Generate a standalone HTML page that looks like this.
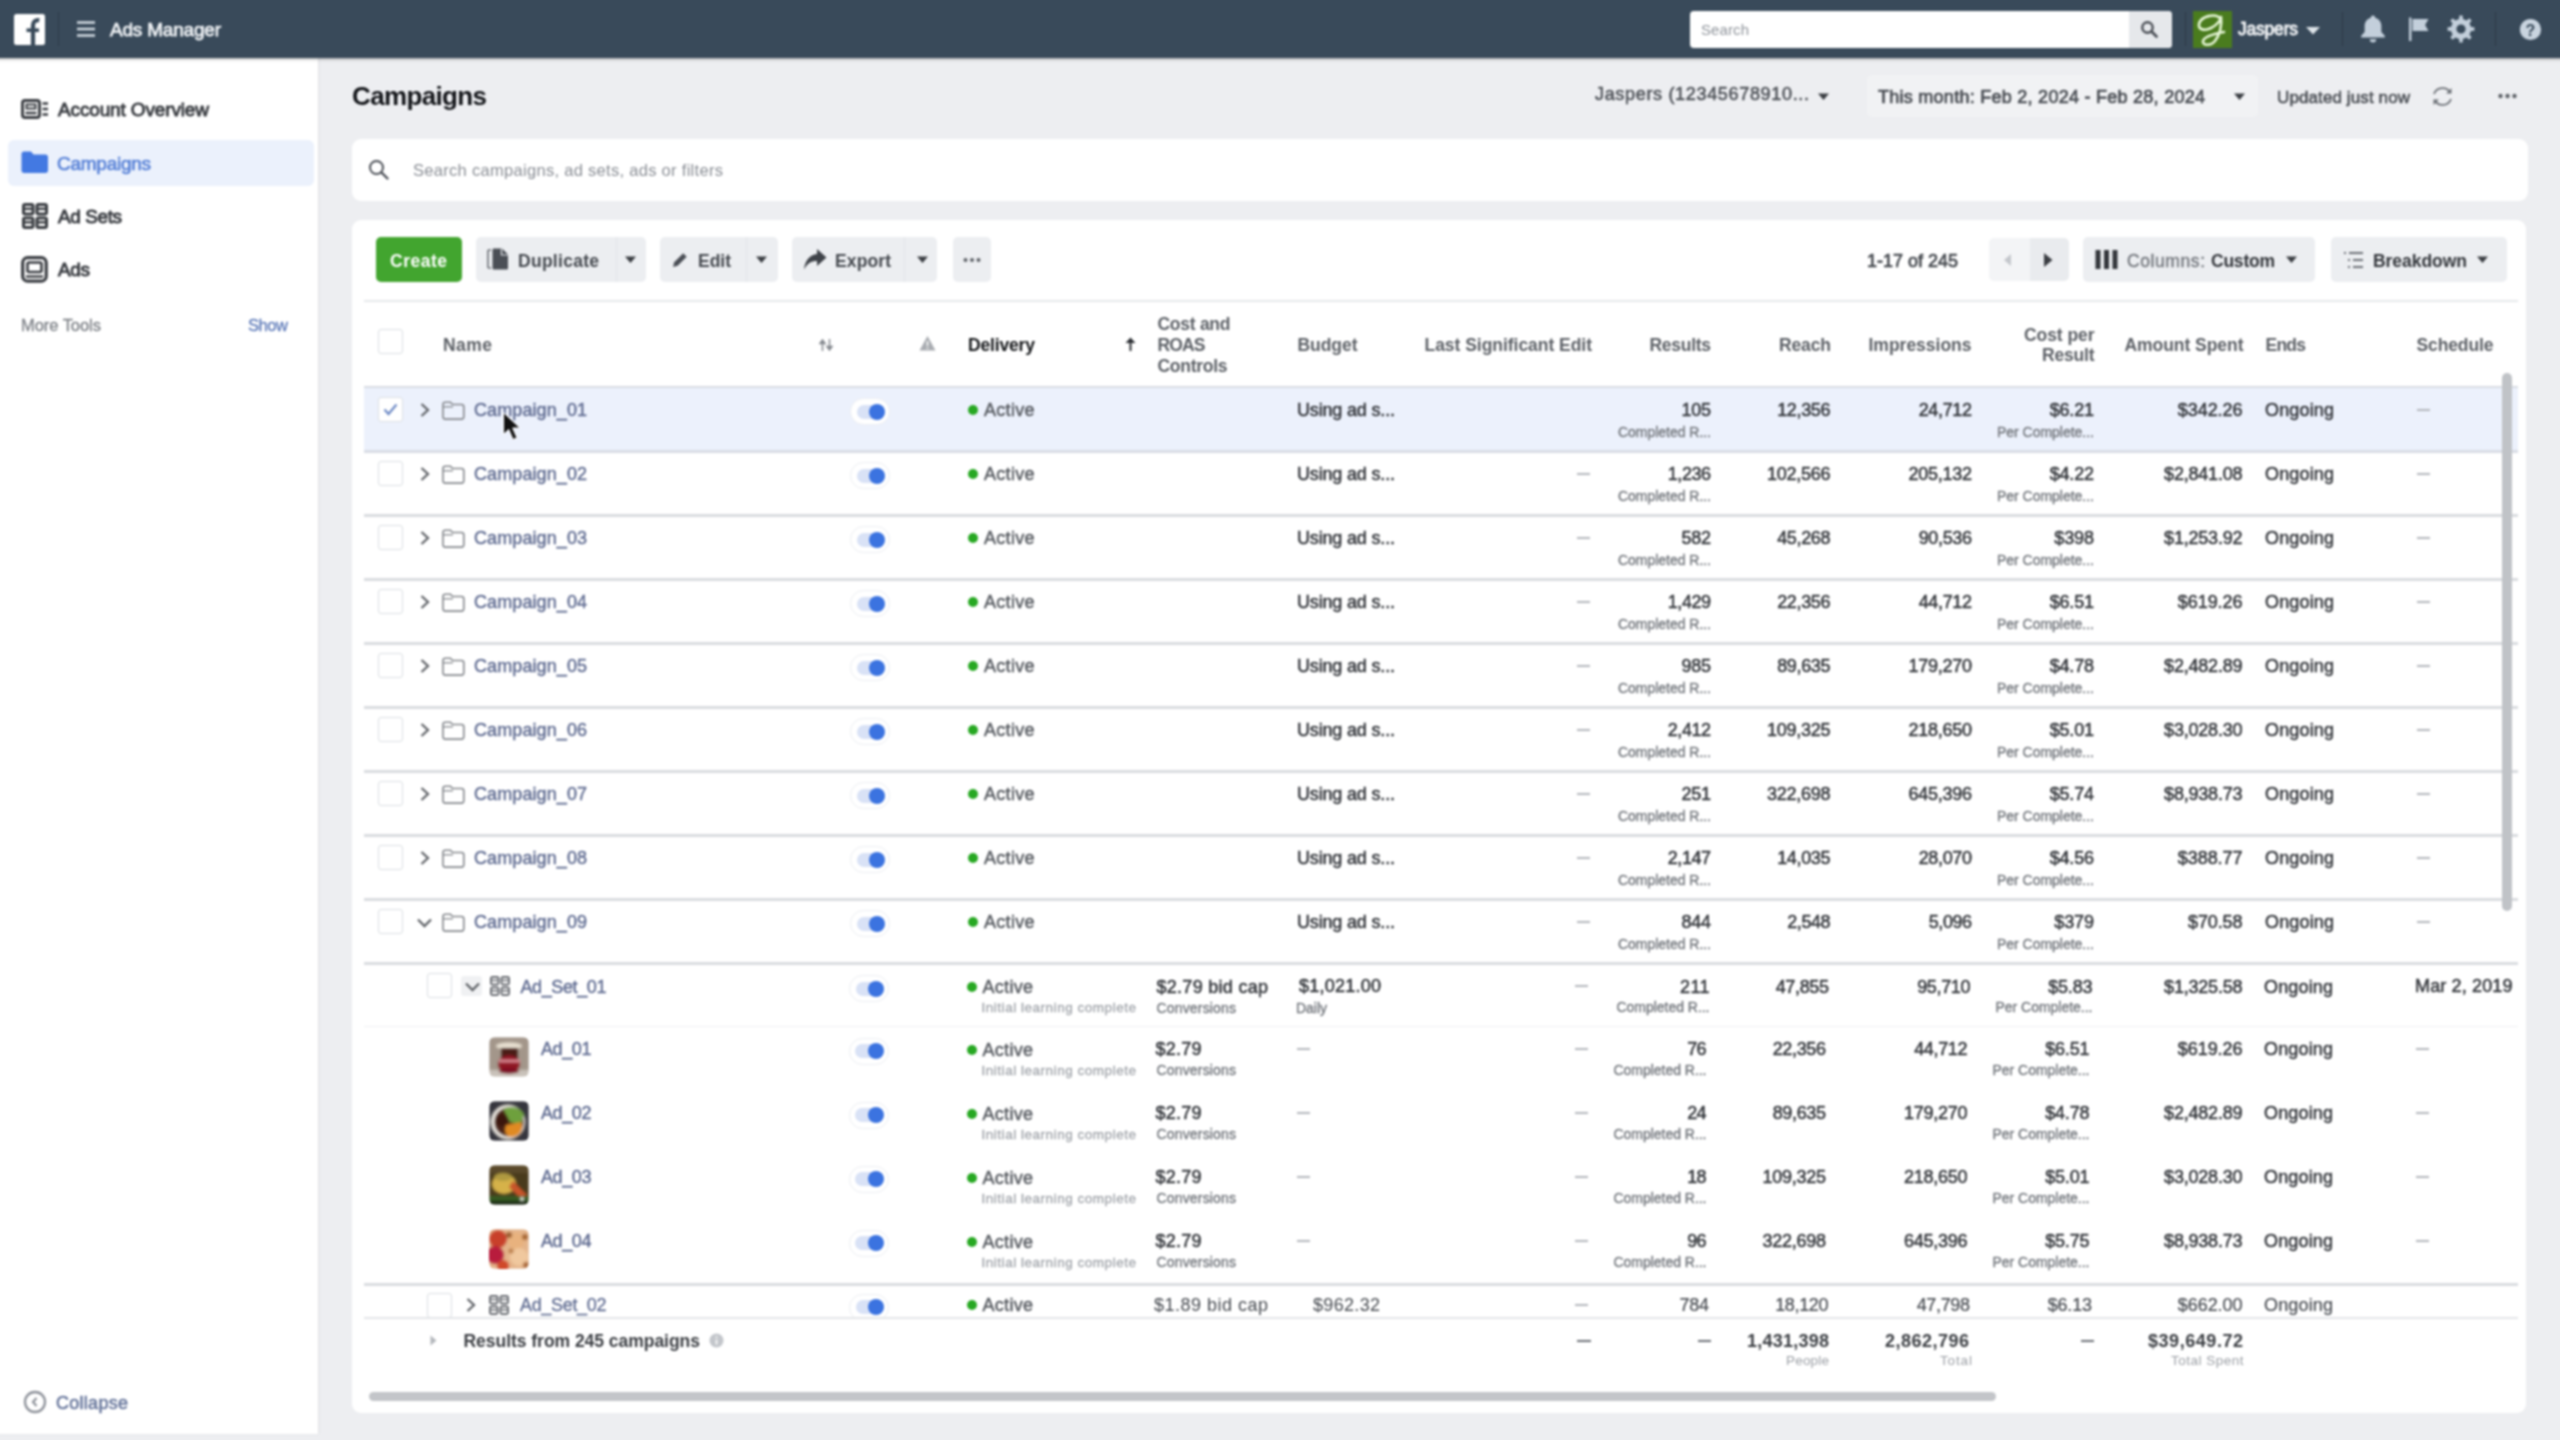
<!DOCTYPE html>
<html lang="en"><head><meta charset="utf-8"><title>Ads Manager - Campaigns</title>
<style>
html,body{margin:0;padding:0}
body{width:2560px;height:1440px;overflow:hidden;position:relative;background:#edeef1;font-family:"Liberation Sans",sans-serif;}
#w{position:absolute;left:-20px;top:-20px;width:2600px;height:1480px;background:#edeef1;filter:blur(.9px)}
#c{position:absolute;left:20px;top:20px;width:2560px;height:1440px}
#c div,#c span,#c svg{position:absolute;display:block;box-sizing:border-box}
#c span{white-space:pre}
</style></head>
<body>
<div id="w"><div id="c">
<div style="left:-20px;top:58px;width:338px;height:1376px;background:#fff;box-shadow:1px 0 2px rgba(0,0,0,.06);"></div>
<div style="left:8px;top:140px;width:306px;height:46px;background:#ebf1fc;border-radius:6px;"></div>
<div style="left:-20px;top:-20px;width:2600px;height:78px;background:#394a5a;box-shadow:0 1px 3px rgba(0,0,0,.35);"></div>
<svg style="left:14px;top:14px;" width="31" height="31" viewBox="0 0 31 31"><rect width="31" height="31" rx="2.500" fill="#fff"/><path d="M19 31V11.500c0-3.800 2.300-5.800 6.300-5.300" fill="none" stroke="#394a5a" stroke-width="4.200"/><path d="M12.500 16.200h12.500" stroke="#394a5a" stroke-width="3.600"/></svg>
<div style="left:58px;top:12px;width:1px;height:34px;background:rgba(0,0,0,.18);"></div>
<svg style="left:77px;top:20px;" width="18" height="18" viewBox="0 0 18 18"><path d="M0 2.5h18M0 9h18M0 15.5h18" stroke="#d3dbe3" stroke-width="2.500"/></svg>
<span style="left:110.00px;top:20px;font-size:19px;line-height:19px;color:#eef1f4;letter-spacing:-0.202px;-webkit-text-stroke:.75px #eef1f4;">Ads Manager</span>
<div style="left:1690px;top:11px;width:482px;height:37px;background:#fff;border-radius:4px;"></div>
<div style="left:2129px;top:11px;width:43px;height:37px;background:#e6e8eb;border-radius:0 4px 4px 0;"></div>
<span style="left:1701.00px;top:22px;font-size:15px;line-height:15px;color:#8f949b;letter-spacing:0.094px;">Search</span>
<svg style="left:2140px;top:20px;" width="19" height="19" viewBox="0 0 19 19"><circle cx="7.5" cy="7.5" r="5.2" fill="none" stroke="#4b4f56" stroke-width="2.4"/><path d="M11.5 11.5l5 5" stroke="#4b4f56" stroke-width="2.8" stroke-linecap="round"/></svg>
<div style="left:2185px;top:12px;width:1px;height:34px;background:rgba(0,0,0,.22);"></div>
<div style="left:2193px;top:11px;width:39px;height:37px;background:#4a7c1e;"></div>
<svg style="left:2193px;top:11px;" width="39" height="37" viewBox="0 0 39 37"><path d="M27 7C22 2 8 5 6 13C5 19 12 20 18 17C24 14 28 9 28 6C29 14 27 24 22 30C18 35 9 35 10 30C11 26 20 23 31 21" fill="none" stroke="#e6f6d6" stroke-width="2.600" stroke-linecap="round" stroke-linejoin="round"/></svg>
<span style="left:2238.00px;top:21px;font-size:17.5px;line-height:17.5px;color:#f3f5f7;letter-spacing:-0.214px;-webkit-text-stroke:.8px #f3f5f7;">Jaspers</span>
<svg style="left:2306px;top:27px;" width="14" height="8" viewBox="0 0 14 8"><path d="M0 0h14l-7 7.5z" fill="#dfe5ea"/></svg>
<div style="left:2342px;top:12px;width:1px;height:34px;background:rgba(0,0,0,.22);"></div>
<svg style="left:2358px;top:14px;" width="30" height="30" viewBox="0 0 28 28"><path d="M14 1.5c-1.2 0-2 .8-2 1.9-3.6.9-5.8 3.9-5.8 7.8v5.6L3 20.4V22h22v-1.6l-3.2-3.6v-5.6c0-3.9-2.2-6.9-5.8-7.8 0-1.1-.8-1.9-2-1.9zM11 23.5a3 3 0 006 0z" fill="#c3cfdb"/></svg>
<svg style="left:2406px;top:16px;" width="26" height="26" viewBox="0 0 26 26"><path d="M3 1.5h2.4V25H3zM6.5 3h16l-3.4 6 3.4 6h-16z" fill="#c3cfdb"/></svg>
<svg style="left:2447px;top:15px;" width="28" height="28" viewBox="0 0 28 28"><path fill-rule="evenodd" d="M24.0 12.1L27.4 12.3L27.4 15.7L24.0 15.9L22.4 19.7L24.7 22.3L22.3 24.7L19.7 22.4L15.9 24.0L15.7 27.4L12.3 27.4L12.1 24.0L8.3 22.4L5.7 24.7L3.3 22.3L5.6 19.7L4.0 15.9L0.6 15.7L0.6 12.3L4.0 12.1L5.6 8.3L3.3 5.7L5.7 3.3L8.3 5.6L12.1 4.0L12.3 0.6L15.7 0.6L15.9 4.0L19.7 5.6L22.3 3.3L24.7 5.7L22.4 8.3zM18.6 14.0a4.6 4.6 0 1 0 -9.2 0a4.6 4.6 0 1 0 9.2 0z" fill="#c3cfdb"/></svg>
<div style="left:2495px;top:12px;width:1px;height:34px;background:rgba(0,0,0,.22);"></div>
<svg style="left:2519px;top:18px;" width="23" height="23" viewBox="0 0 23 23"><circle cx="11.5" cy="11.5" r="10.600" fill="#c9d4df"/></svg>
<span style="left:2525.61px;top:23px;font-size:16px;line-height:16px;color:#394a5a;font-weight:700;">?</span>
<svg style="left:21px;top:98px;" width="28" height="22" viewBox="0 0 28 22"><rect x="1.500" y="2.500" width="17" height="17" rx="2.500" fill="none" stroke="#3b3e43" stroke-width="2.900"/><rect x="5.500" y="6.500" width="9" height="4" fill="none" stroke="#3b3e43" stroke-width="2"/><path d="M4.500 15h11M21.500 5.500h5.500M21.500 11h5.500M21.500 16.500h5.500" stroke="#3b3e43" stroke-width="2.400"/></svg>
<span style="left:58.00px;top:100px;font-size:19px;line-height:19px;color:#3b3e43;letter-spacing:-0.142px;-webkit-text-stroke:.9px #3b3e43;">Account Overview</span>
<svg style="left:21px;top:151px;" width="28" height="23" viewBox="0 0 28 23"><path d="M0.500 3c0-1.400 1-2.500 2.500-2.500h7l2.500 3h12c1.400 0 2.500 1 2.500 2.500v13.500c0 1.400-1 2.500-2.500 2.500h-21.500c-1.400 0-2.500-1-2.500-2.500z" fill="#4379e2"/></svg>
<span style="left:57.00px;top:154px;font-size:19px;line-height:19px;color:#5b84d8;letter-spacing:-0.264px;-webkit-text-stroke:.7px #5b84d8;">Campaigns</span>
<svg style="left:21.5px;top:203px;" width="27" height="27" viewBox="0 0 27 27"><rect x="1.5" y="1.5" width="9.5" height="9.5" rx="1.5" fill="none" stroke="#3b3e43" stroke-width="3"/><path d="M1.5 5.775h9.5" stroke="#3b3e43" stroke-width="2.4"/><rect x="15" y="1.5" width="9.5" height="9.5" rx="1.5" fill="none" stroke="#3b3e43" stroke-width="3"/><path d="M15 5.775h9.5" stroke="#3b3e43" stroke-width="2.4"/><rect x="1.5" y="15" width="9.5" height="9.5" rx="1.5" fill="none" stroke="#3b3e43" stroke-width="3"/><path d="M1.5 19.275h9.5" stroke="#3b3e43" stroke-width="2.4"/><rect x="15" y="15" width="9.5" height="9.5" rx="1.5" fill="none" stroke="#3b3e43" stroke-width="3"/><path d="M15 19.275h9.5" stroke="#3b3e43" stroke-width="2.4"/></svg>
<span style="left:58.00px;top:207px;font-size:19px;line-height:19px;color:#3b3e43;letter-spacing:-0.424px;-webkit-text-stroke:.9px #3b3e43;">Ad Sets</span>
<svg style="left:21px;top:255.5px;" width="28" height="28" viewBox="0 0 28 28"><rect x="1.700" y="1.700" width="23.500" height="23.500" rx="5" fill="none" stroke="#3b3e43" stroke-width="3.200"/><rect x="6.500" y="6.500" width="14" height="9.500" rx="1.500" fill="none" stroke="#3b3e43" stroke-width="2.600"/><path d="M5 20.500h17" stroke="#3b3e43" stroke-width="2.400"/></svg>
<span style="left:58.00px;top:260px;font-size:19px;line-height:19px;color:#3b3e43;letter-spacing:-0.375px;-webkit-text-stroke:.9px #3b3e43;">Ads</span>
<span style="left:21.00px;top:317px;font-size:16.5px;line-height:16.5px;color:#7d8187;letter-spacing:-0.045px;-webkit-text-stroke:.3px #7d8187;">More Tools</span>
<span style="left:248.00px;top:317px;font-size:16.5px;line-height:16.5px;color:#5c79b8;letter-spacing:-0.427px;-webkit-text-stroke:.3px #5c79b8;">Show</span>
<svg style="left:23px;top:1390px;" width="24" height="24" viewBox="0 0 24 24"><circle cx="12" cy="12" r="10" fill="none" stroke="#8f939b" stroke-width="2.300"/><path d="M13.500 8l-3.500 4 3.500 4" fill="none" stroke="#8f939b" stroke-width="2.200"/></svg>
<span style="left:56.00px;top:1394px;font-size:18px;line-height:18px;color:#65749a;letter-spacing:0.279px;-webkit-text-stroke:.5px #65749a;">Collapse</span>
<span style="left:352.00px;top:83px;font-size:26px;line-height:26px;color:#14161a;font-weight:700;letter-spacing:-0.645px;">Campaigns</span>
<span style="left:1595.00px;top:85px;font-size:18px;line-height:18px;color:#50545a;letter-spacing:0.675px;-webkit-text-stroke:.55px #50545a;">Jaspers (12345678910...</span>
<svg style="left:1817px;top:93px;" width="13" height="8" viewBox="0 0 13 8"><path d="M1 0.500h11l-5.500 6.500z" fill="#3b3e43"/></svg>
<div style="left:1867px;top:75px;width:391px;height:42px;background:#f1f2f4;border-radius:5px;"></div>
<span style="left:1878.00px;top:88px;font-size:18px;line-height:18px;color:#4a4e54;letter-spacing:0.265px;-webkit-text-stroke:.7px #4a4e54;">This month: Feb 2, 2024 - Feb 28, 2024</span>
<svg style="left:2233px;top:93px;" width="13" height="8" viewBox="0 0 13 8"><path d="M1 0.500h11l-5.500 6.500z" fill="#3b3e43"/></svg>
<span style="left:2277.00px;top:89px;font-size:17px;line-height:17px;color:#4a4e54;letter-spacing:0.108px;-webkit-text-stroke:.55px #4a4e54;">Updated just now</span>
<svg style="left:2431px;top:85px;" width="23" height="23" viewBox="0 0 23 23"><path d="M19.500 8a9 9 0 00-16.500 1M3.500 15a9 9 0 0016.500-1" fill="none" stroke="#6d7177" stroke-width="1.800"/><path d="M20.500 3v5.500h-5.500zM2.500 20v-5.500h5.500z" fill="#6d7177"/></svg>
<svg style="left:2498px;top:93px;" width="19" height="6" viewBox="0 0 19 6"><circle cx="2.500" cy="3" r="2.200" fill="#5d6167"/><circle cx="9.500" cy="3" r="2.200" fill="#5d6167"/><circle cx="16.500" cy="3" r="2.200" fill="#5d6167"/></svg>
<div style="left:352px;top:139px;width:2176px;height:62px;background:#fff;border-radius:9px;"></div>
<svg style="left:368px;top:159px;" width="22" height="22" viewBox="0 0 22 22"><circle cx="8.500" cy="8.500" r="6.500" fill="none" stroke="#4b4f56" stroke-width="2"/><path d="M13.500 13.500l6 6" stroke="#4b4f56" stroke-width="2.400" stroke-linecap="round"/></svg>
<span style="left:413.00px;top:162px;font-size:16.5px;line-height:16.5px;color:#8a8e95;letter-spacing:0.298px;">Search campaigns, ad sets, ads or filters</span>
<div style="left:352px;top:220px;width:2174px;height:1193px;background:#fff;border-radius:9px;"></div>
<div style="left:376px;top:237px;width:86px;height:45px;background:#42a52f;border-radius:5px;"></div>
<span style="left:390.00px;top:253px;font-size:17.5px;line-height:17.5px;color:#fff;font-weight:700;letter-spacing:0.503px;">Create</span>
<div style="left:476px;top:237px;width:170px;height:45px;background:#eceef1;border-radius:5px;"></div>
<div style="left:616px;top:237px;width:1px;height:45px;background:#e2e4e8;"></div>
<svg style="left:486px;top:247px;" width="24" height="24" viewBox="0 0 24 24"><path d="M2 3h3M2 3v18M2 21h3" stroke="#6d7177" stroke-width="1.600" fill="none"/><path d="M8 1.500h8l6 6v13.500c0 1-.5 1.500-1.500 1.500h-12.500c-1 0-1.500-.5-1.500-1.500v-18c0-1 .5-1.500 1.500-1.500z" fill="#4b4f56"/><path d="M15.500 1.500v6.500h6.500" fill="none" stroke="#eceef1" stroke-width="1.200"/></svg>
<span style="left:518.00px;top:253px;font-size:17.5px;line-height:17.5px;color:#44484e;font-weight:700;letter-spacing:0.277px;">Duplicate</span>
<svg style="left:624px;top:256px;" width="13" height="8" viewBox="0 0 13 8"><path d="M1 0.500h11l-5.500 6.500z" fill="#3b3e43"/></svg>
<div style="left:660px;top:237px;width:118px;height:45px;background:#eceef1;border-radius:5px;"></div>
<div style="left:746px;top:237px;width:1px;height:45px;background:#e2e4e8;"></div>
<svg style="left:671px;top:251px;" width="18" height="18" viewBox="0 0 18 18"><path d="M2 16l1.200-4.700 9-9 3.500 3.500-9 9z" fill="#4b4f56"/></svg>
<span style="left:698.00px;top:253px;font-size:17.5px;line-height:17.5px;color:#44484e;font-weight:700;letter-spacing:-0.021px;">Edit</span>
<svg style="left:755px;top:256px;" width="13" height="8" viewBox="0 0 13 8"><path d="M1 0.500h11l-5.500 6.500z" fill="#3b3e43"/></svg>
<div style="left:792px;top:237px;width:145px;height:45px;background:#eceef1;border-radius:5px;"></div>
<div style="left:904px;top:237px;width:1px;height:45px;background:#e2e4e8;"></div>
<svg style="left:803px;top:248px;" width="24" height="23" viewBox="0 0 24 23"><path d="M14 1l9.500 8.500-9.500 8.500v-5c-6 0-10 2.500-13 8.500 1-9 5.500-14.500 13-15.500z" fill="#3f4349"/></svg>
<span style="left:835.00px;top:253px;font-size:17.5px;line-height:17.5px;color:#44484e;font-weight:700;letter-spacing:0.113px;">Export</span>
<svg style="left:916px;top:256px;" width="13" height="8" viewBox="0 0 13 8"><path d="M1 0.500h11l-5.500 6.500z" fill="#3b3e43"/></svg>
<div style="left:953px;top:237px;width:38px;height:45px;background:#eceef1;border-radius:5px;"></div>
<svg style="left:963px;top:257px;" width="18" height="6" viewBox="0 0 18 6"><circle cx="2.500" cy="3" r="2" fill="#5d6167"/><circle cx="9" cy="3" r="2" fill="#5d6167"/><circle cx="15.500" cy="3" r="2" fill="#5d6167"/></svg>
<span style="left:1867.00px;top:252px;font-size:18px;line-height:18px;color:#44484e;-webkit-text-stroke:.7px #44484e;">1-17 of 245</span>
<div style="left:1989px;top:238px;width:41px;height:43px;background:#f3f4f6;border-radius:5px 0 0 5px;"></div>
<div style="left:2030px;top:238px;width:39px;height:43px;background:#e9ebee;border-radius:0 5px 5px 0;"></div>
<svg style="left:2003px;top:254px;" width="8" height="12" viewBox="0 0 8 12"><path d="M8 0v12l-7-6z" fill="#c4c7cc"/></svg>
<svg style="left:2044px;top:253px;" width="9" height="14" viewBox="0 0 9 14"><path d="M0 0v14l8.500-7z" fill="#3b3e43"/></svg>
<div style="left:2083px;top:237px;width:232px;height:45px;background:#eceef1;border-radius:5px;"></div>
<svg style="left:2095px;top:250px;" width="23" height="19" viewBox="0 0 23 19"><path d="M3 0v19M11.500 0v19M20 0v19" stroke="#33363b" stroke-width="5"/></svg>
<span style="left:2127.00px;top:253px;font-size:17.5px;line-height:17.5px;color:#72767c;letter-spacing:0.583px;-webkit-text-stroke:.35px #72767c;">Columns:</span>
<span style="left:2211.00px;top:253px;font-size:17.5px;line-height:17.5px;color:#33363b;font-weight:700;letter-spacing:-0.228px;">Custom</span>
<svg style="left:2285px;top:256px;" width="13" height="8" viewBox="0 0 13 8"><path d="M1 0.500h11l-5.500 6.500z" fill="#3b3e43"/></svg>
<div style="left:2331px;top:237px;width:176px;height:45px;background:#eceef1;border-radius:5px;"></div>
<svg style="left:2343px;top:251px;" width="21" height="18" viewBox="0 0 21 18"><path d="M1 2h2M6 2h14M5 9h2M10 9h10M5 16h2M10 16h10" stroke="#6d7177" stroke-width="1.800"/></svg>
<span style="left:2373.00px;top:253px;font-size:17.5px;line-height:17.5px;color:#33363b;font-weight:700;letter-spacing:-0.041px;">Breakdown</span>
<svg style="left:2476px;top:256px;" width="13" height="8" viewBox="0 0 13 8"><path d="M1 0.500h11l-5.500 6.500z" fill="#3b3e43"/></svg>
<div style="left:364px;top:300px;width:2154px;height:2px;background:#e6e8eb;"></div>
<div style="left:378px;top:329px;width:25px;height:25px;background:#fff;border-radius:3px;border:1.500px solid #dcdfe3;"></div>
<span style="left:443.00px;top:337px;font-size:17.5px;line-height:17.5px;color:#5c6066;font-weight:600;letter-spacing:0.443px;">Name</span>
<svg style="left:819px;top:339px;" width="15" height="12" viewBox="0 0 15 12"><path d="M3.500 12v-10M1 4.500l2.500-3.500 2.500 3.500zM10.500 0v10M8 7.500l2.500 3.500 2.500-3.500z" stroke="#85898f" stroke-width="1.500" fill="#85898f"/></svg>
<svg style="left:919px;top:335px;" width="17" height="16" viewBox="0 0 17 16"><path d="M8.500 1l8 14.500h-16z" fill="#a9acb1"/><path d="M8.500 6v5M8.500 12.500v1.500" stroke="#fff" stroke-width="1.500"/></svg>
<span style="left:968.00px;top:337px;font-size:17.5px;line-height:17.5px;color:#121417;font-weight:700;letter-spacing:-0.158px;">Delivery</span>
<svg style="left:1125px;top:337px;" width="11" height="14" viewBox="0 0 11 14"><path d="M5.500 14v-11" stroke="#2b2e33" stroke-width="2"/><path d="M0.500 6l5-5.500 5 5.500z" fill="#2b2e33"/></svg>
<span style="left:1157.50px;top:316px;font-size:17.5px;line-height:17.5px;color:#5c6066;font-weight:600;letter-spacing:-0.268px;">Cost and</span>
<span style="left:1157.50px;top:337px;font-size:17.5px;line-height:17.5px;color:#5c6066;font-weight:600;letter-spacing:-0.854px;">ROAS</span>
<span style="left:1157.50px;top:358px;font-size:17.5px;line-height:17.5px;color:#5c6066;font-weight:600;letter-spacing:-0.279px;">Controls</span>
<span style="left:1297.50px;top:337px;font-size:17.5px;line-height:17.5px;color:#5c6066;font-weight:600;letter-spacing:-0.056px;">Budget</span>
<span style="left:1424.50px;top:337px;font-size:17.5px;line-height:17.5px;color:#5c6066;font-weight:600;letter-spacing:-0.036px;">Last Significant Edit</span>
<span style="left:1649.50px;top:337px;font-size:17.5px;line-height:17.5px;color:#5c6066;font-weight:600;letter-spacing:-0.286px;">Results</span>
<span style="left:1779.00px;top:337px;font-size:17.5px;line-height:17.5px;color:#5c6066;font-weight:600;letter-spacing:-0.133px;">Reach</span>
<span style="left:1868.50px;top:337px;font-size:17.5px;line-height:17.5px;color:#5c6066;font-weight:600;letter-spacing:-0.011px;">Impressions</span>
<span style="left:2024.00px;top:327px;font-size:17.5px;line-height:17.5px;color:#5c6066;font-weight:600;letter-spacing:-0.069px;">Cost per</span>
<span style="left:2042.00px;top:347px;font-size:17.5px;line-height:17.5px;color:#5c6066;font-weight:600;letter-spacing:-0.197px;">Result</span>
<span style="left:2124.50px;top:337px;font-size:17.5px;line-height:17.5px;color:#5c6066;font-weight:600;letter-spacing:-0.053px;">Amount Spent</span>
<span style="left:2265.50px;top:337px;font-size:17.5px;line-height:17.5px;color:#5c6066;font-weight:600;letter-spacing:-0.766px;">Ends</span>
<span style="left:2416.50px;top:337px;font-size:17.5px;line-height:17.5px;color:#5c6066;font-weight:600;letter-spacing:-0.116px;">Schedule</span>
<div style="left:364px;top:387px;width:2154px;height:64px;background:#ecf1fc;"></div>
<div style="left:364px;top:386.25px;width:2154px;height:2px;background:#d8dce3;"></div>
<div style="left:378px;top:397px;width:25px;height:25px;background:#fff;border-radius:3px;border:1.500px solid #dcdfe3;"></div>
<svg style="left:383px;top:403px;" width="15" height="13" viewBox="0 0 15 13"><path d="M1.500 6.500l4 4.500 8-9.500" fill="none" stroke="#6f8bc6" stroke-width="2.200"/></svg>
<svg style="left:420px;top:402.5px;" width="10" height="14" viewBox="0 0 10 14"><path d="M1.500 1l6.500 6-6.500 6" fill="none" stroke="#63666b" stroke-width="2.300"/></svg>
<svg style="left:441.5px;top:400.5px;" width="23" height="19" viewBox="0 0 23 19"><path d="M1 3.500c0-1.300.8-2.300 2.200-2.300h5.300l2 2.300h9c1.400 0 2.300.9 2.300 2.300v10c0 1.400-.9 2.300-2.300 2.300h-16.200c-1.400 0-2.300-.9-2.300-2.300z" fill="none" stroke="#85888d" stroke-width="1.600"/><path d="M1 5.800h10" stroke="#85888d" stroke-width="1.300"/></svg>
<span style="left:474.00px;top:401px;font-size:18px;line-height:18px;color:#626e93;letter-spacing:0.092px;-webkit-text-stroke:.45px #626e93;">Campaign_01</span>
<div style="left:850px;top:398px;width:40px;height:27px;background:#fff;border-radius:13.5px;border:1px solid #eceef2;"></div>
<div style="left:856.5px;top:404.5px;width:28px;height:14px;background:#d9e2f6;border-radius:7px;"></div>
<div style="left:869px;top:403.5px;width:16px;height:16px;background:#3b73e0;border-radius:8px;"></div>
<div style="left:968px;top:405px;width:10px;height:10px;background:#27a822;border-radius:5px;"></div>
<span style="left:984.00px;top:401px;font-size:18px;line-height:18px;color:#565a60;letter-spacing:0.294px;-webkit-text-stroke:.45px #565a60;">Active</span>
<span style="left:1297.00px;top:401px;font-size:18px;line-height:18px;color:#34373c;letter-spacing:-0.171px;-webkit-text-stroke:.5px #34373c;">Using ad s...</span>
<span style="left:1681.55px;top:401px;font-size:18px;line-height:18px;color:#34373c;letter-spacing:-0.298px;-webkit-text-stroke:.5px #34373c;">105</span>
<span style="left:1777.15px;top:401px;font-size:18px;line-height:18px;color:#34373c;letter-spacing:-0.342px;-webkit-text-stroke:.5px #34373c;">12,356</span>
<span style="left:1918.65px;top:401px;font-size:18px;line-height:18px;color:#34373c;letter-spacing:-0.342px;-webkit-text-stroke:.5px #34373c;">24,712</span>
<span style="left:2049.65px;top:401px;font-size:18px;line-height:18px;color:#34373c;letter-spacing:-0.174px;-webkit-text-stroke:.5px #34373c;">$6.21</span>
<span style="left:2177.85px;top:401px;font-size:18px;line-height:18px;color:#34373c;letter-spacing:-0.071px;-webkit-text-stroke:.5px #34373c;">$342.26</span>
<span style="left:2265.00px;top:401px;font-size:18px;line-height:18px;color:#34373c;letter-spacing:0.156px;-webkit-text-stroke:.5px #34373c;">Ongoing</span>
<span style="left:1618.00px;top:425px;font-size:14px;line-height:14px;color:#777b81;letter-spacing:-0.029px;-webkit-text-stroke:.4px #777b81;">Completed R...</span>
<span style="left:1997.00px;top:425px;font-size:14px;line-height:14px;color:#777b81;letter-spacing:-0.019px;-webkit-text-stroke:.4px #777b81;">Per Complete...</span>
<div style="left:2417px;top:408.5px;width:13px;height:2px;background:#b4b7bc;"></div>
<div style="left:364px;top:450.25px;width:2154px;height:2.5px;background:#dadce0;"></div>
<div style="left:378px;top:461px;width:25px;height:25px;background:#fff;border-radius:3px;border:1.500px solid #dcdfe3;"></div>
<svg style="left:420px;top:466.5px;" width="10" height="14" viewBox="0 0 10 14"><path d="M1.500 1l6.500 6-6.500 6" fill="none" stroke="#63666b" stroke-width="2.300"/></svg>
<svg style="left:441.5px;top:464.5px;" width="23" height="19" viewBox="0 0 23 19"><path d="M1 3.500c0-1.300.8-2.300 2.200-2.300h5.300l2 2.300h9c1.400 0 2.300.9 2.300 2.300v10c0 1.400-.9 2.300-2.300 2.300h-16.200c-1.400 0-2.300-.9-2.300-2.300z" fill="none" stroke="#85888d" stroke-width="1.600"/><path d="M1 5.800h10" stroke="#85888d" stroke-width="1.300"/></svg>
<span style="left:474.00px;top:465px;font-size:18px;line-height:18px;color:#626e93;letter-spacing:0.092px;-webkit-text-stroke:.45px #626e93;">Campaign_02</span>
<div style="left:850px;top:462px;width:40px;height:27px;background:#fff;border-radius:13.5px;border:1px solid #eceef2;"></div>
<div style="left:856.5px;top:468.5px;width:28px;height:14px;background:#d9e2f6;border-radius:7px;"></div>
<div style="left:869px;top:467.5px;width:16px;height:16px;background:#3b73e0;border-radius:8px;"></div>
<div style="left:968px;top:469px;width:10px;height:10px;background:#27a822;border-radius:5px;"></div>
<span style="left:984.00px;top:465px;font-size:18px;line-height:18px;color:#565a60;letter-spacing:0.294px;-webkit-text-stroke:.45px #565a60;">Active</span>
<span style="left:1297.00px;top:465px;font-size:18px;line-height:18px;color:#34373c;letter-spacing:-0.171px;-webkit-text-stroke:.5px #34373c;">Using ad s...</span>
<div style="left:1577px;top:473px;width:13px;height:2px;background:#b4b7bc;"></div>
<span style="left:1667.80px;top:465px;font-size:18px;line-height:18px;color:#34373c;letter-spacing:-0.462px;-webkit-text-stroke:.5px #34373c;">1,236</span>
<span style="left:1767.00px;top:465px;font-size:18px;line-height:18px;color:#34373c;letter-spacing:-0.263px;-webkit-text-stroke:.5px #34373c;">102,566</span>
<span style="left:1908.50px;top:465px;font-size:18px;line-height:18px;color:#34373c;letter-spacing:-0.263px;-webkit-text-stroke:.5px #34373c;">205,132</span>
<span style="left:2049.65px;top:465px;font-size:18px;line-height:18px;color:#34373c;letter-spacing:-0.174px;-webkit-text-stroke:.5px #34373c;">$4.22</span>
<span style="left:2164.10px;top:465px;font-size:18px;line-height:18px;color:#34373c;letter-spacing:-0.210px;-webkit-text-stroke:.5px #34373c;">$2,841.08</span>
<span style="left:2265.00px;top:465px;font-size:18px;line-height:18px;color:#34373c;letter-spacing:0.156px;-webkit-text-stroke:.5px #34373c;">Ongoing</span>
<span style="left:1618.00px;top:489px;font-size:14px;line-height:14px;color:#777b81;letter-spacing:-0.029px;-webkit-text-stroke:.4px #777b81;">Completed R...</span>
<span style="left:1997.00px;top:489px;font-size:14px;line-height:14px;color:#777b81;letter-spacing:-0.019px;-webkit-text-stroke:.4px #777b81;">Per Complete...</span>
<div style="left:2417px;top:472.5px;width:13px;height:2px;background:#b4b7bc;"></div>
<div style="left:364px;top:514.25px;width:2154px;height:2.5px;background:#dadce0;"></div>
<div style="left:378px;top:525px;width:25px;height:25px;background:#fff;border-radius:3px;border:1.500px solid #dcdfe3;"></div>
<svg style="left:420px;top:530.5px;" width="10" height="14" viewBox="0 0 10 14"><path d="M1.500 1l6.500 6-6.500 6" fill="none" stroke="#63666b" stroke-width="2.300"/></svg>
<svg style="left:441.5px;top:528.5px;" width="23" height="19" viewBox="0 0 23 19"><path d="M1 3.500c0-1.300.8-2.300 2.200-2.300h5.300l2 2.300h9c1.400 0 2.300.9 2.300 2.300v10c0 1.400-.9 2.300-2.300 2.300h-16.200c-1.400 0-2.300-.9-2.300-2.300z" fill="none" stroke="#85888d" stroke-width="1.600"/><path d="M1 5.800h10" stroke="#85888d" stroke-width="1.300"/></svg>
<span style="left:474.00px;top:529px;font-size:18px;line-height:18px;color:#626e93;letter-spacing:0.092px;-webkit-text-stroke:.45px #626e93;">Campaign_03</span>
<div style="left:850px;top:526px;width:40px;height:27px;background:#fff;border-radius:13.5px;border:1px solid #eceef2;"></div>
<div style="left:856.5px;top:532.5px;width:28px;height:14px;background:#d9e2f6;border-radius:7px;"></div>
<div style="left:869px;top:531.5px;width:16px;height:16px;background:#3b73e0;border-radius:8px;"></div>
<div style="left:968px;top:533px;width:10px;height:10px;background:#27a822;border-radius:5px;"></div>
<span style="left:984.00px;top:529px;font-size:18px;line-height:18px;color:#565a60;letter-spacing:0.294px;-webkit-text-stroke:.45px #565a60;">Active</span>
<span style="left:1297.00px;top:529px;font-size:18px;line-height:18px;color:#34373c;letter-spacing:-0.171px;-webkit-text-stroke:.5px #34373c;">Using ad s...</span>
<div style="left:1577px;top:537px;width:13px;height:2px;background:#b4b7bc;"></div>
<span style="left:1681.55px;top:529px;font-size:18px;line-height:18px;color:#34373c;letter-spacing:-0.298px;-webkit-text-stroke:.5px #34373c;">582</span>
<span style="left:1777.15px;top:529px;font-size:18px;line-height:18px;color:#34373c;letter-spacing:-0.342px;-webkit-text-stroke:.5px #34373c;">45,268</span>
<span style="left:1918.65px;top:529px;font-size:18px;line-height:18px;color:#34373c;letter-spacing:-0.342px;-webkit-text-stroke:.5px #34373c;">90,536</span>
<span style="left:2054.35px;top:529px;font-size:18px;line-height:18px;color:#34373c;letter-spacing:-0.132px;-webkit-text-stroke:.5px #34373c;">$398</span>
<span style="left:2164.10px;top:529px;font-size:18px;line-height:18px;color:#34373c;letter-spacing:-0.210px;-webkit-text-stroke:.5px #34373c;">$1,253.92</span>
<span style="left:2265.00px;top:529px;font-size:18px;line-height:18px;color:#34373c;letter-spacing:0.156px;-webkit-text-stroke:.5px #34373c;">Ongoing</span>
<span style="left:1618.00px;top:553px;font-size:14px;line-height:14px;color:#777b81;letter-spacing:-0.029px;-webkit-text-stroke:.4px #777b81;">Completed R...</span>
<span style="left:1997.00px;top:553px;font-size:14px;line-height:14px;color:#777b81;letter-spacing:-0.019px;-webkit-text-stroke:.4px #777b81;">Per Complete...</span>
<div style="left:2417px;top:536.5px;width:13px;height:2px;background:#b4b7bc;"></div>
<div style="left:364px;top:578.25px;width:2154px;height:2.5px;background:#dadce0;"></div>
<div style="left:378px;top:589px;width:25px;height:25px;background:#fff;border-radius:3px;border:1.500px solid #dcdfe3;"></div>
<svg style="left:420px;top:594.5px;" width="10" height="14" viewBox="0 0 10 14"><path d="M1.500 1l6.500 6-6.500 6" fill="none" stroke="#63666b" stroke-width="2.300"/></svg>
<svg style="left:441.5px;top:592.5px;" width="23" height="19" viewBox="0 0 23 19"><path d="M1 3.500c0-1.300.8-2.300 2.200-2.300h5.300l2 2.300h9c1.400 0 2.300.9 2.300 2.300v10c0 1.400-.9 2.300-2.300 2.300h-16.200c-1.400 0-2.300-.9-2.300-2.300z" fill="none" stroke="#85888d" stroke-width="1.600"/><path d="M1 5.800h10" stroke="#85888d" stroke-width="1.300"/></svg>
<span style="left:474.00px;top:593px;font-size:18px;line-height:18px;color:#626e93;letter-spacing:0.092px;-webkit-text-stroke:.45px #626e93;">Campaign_04</span>
<div style="left:850px;top:590px;width:40px;height:27px;background:#fff;border-radius:13.5px;border:1px solid #eceef2;"></div>
<div style="left:856.5px;top:596.5px;width:28px;height:14px;background:#d9e2f6;border-radius:7px;"></div>
<div style="left:869px;top:595.5px;width:16px;height:16px;background:#3b73e0;border-radius:8px;"></div>
<div style="left:968px;top:597px;width:10px;height:10px;background:#27a822;border-radius:5px;"></div>
<span style="left:984.00px;top:593px;font-size:18px;line-height:18px;color:#565a60;letter-spacing:0.294px;-webkit-text-stroke:.45px #565a60;">Active</span>
<span style="left:1297.00px;top:593px;font-size:18px;line-height:18px;color:#34373c;letter-spacing:-0.171px;-webkit-text-stroke:.5px #34373c;">Using ad s...</span>
<div style="left:1577px;top:601px;width:13px;height:2px;background:#b4b7bc;"></div>
<span style="left:1667.80px;top:593px;font-size:18px;line-height:18px;color:#34373c;letter-spacing:-0.462px;-webkit-text-stroke:.5px #34373c;">1,429</span>
<span style="left:1777.15px;top:593px;font-size:18px;line-height:18px;color:#34373c;letter-spacing:-0.342px;-webkit-text-stroke:.5px #34373c;">22,356</span>
<span style="left:1918.65px;top:593px;font-size:18px;line-height:18px;color:#34373c;letter-spacing:-0.342px;-webkit-text-stroke:.5px #34373c;">44,712</span>
<span style="left:2049.65px;top:593px;font-size:18px;line-height:18px;color:#34373c;letter-spacing:-0.174px;-webkit-text-stroke:.5px #34373c;">$6.51</span>
<span style="left:2177.85px;top:593px;font-size:18px;line-height:18px;color:#34373c;letter-spacing:-0.071px;-webkit-text-stroke:.5px #34373c;">$619.26</span>
<span style="left:2265.00px;top:593px;font-size:18px;line-height:18px;color:#34373c;letter-spacing:0.156px;-webkit-text-stroke:.5px #34373c;">Ongoing</span>
<span style="left:1618.00px;top:617px;font-size:14px;line-height:14px;color:#777b81;letter-spacing:-0.029px;-webkit-text-stroke:.4px #777b81;">Completed R...</span>
<span style="left:1997.00px;top:617px;font-size:14px;line-height:14px;color:#777b81;letter-spacing:-0.019px;-webkit-text-stroke:.4px #777b81;">Per Complete...</span>
<div style="left:2417px;top:600.5px;width:13px;height:2px;background:#b4b7bc;"></div>
<div style="left:364px;top:642.25px;width:2154px;height:2.5px;background:#dadce0;"></div>
<div style="left:378px;top:653px;width:25px;height:25px;background:#fff;border-radius:3px;border:1.500px solid #dcdfe3;"></div>
<svg style="left:420px;top:658.5px;" width="10" height="14" viewBox="0 0 10 14"><path d="M1.500 1l6.500 6-6.500 6" fill="none" stroke="#63666b" stroke-width="2.300"/></svg>
<svg style="left:441.5px;top:656.5px;" width="23" height="19" viewBox="0 0 23 19"><path d="M1 3.500c0-1.300.8-2.300 2.200-2.300h5.300l2 2.300h9c1.400 0 2.300.9 2.300 2.300v10c0 1.400-.9 2.300-2.300 2.300h-16.200c-1.400 0-2.300-.9-2.300-2.300z" fill="none" stroke="#85888d" stroke-width="1.600"/><path d="M1 5.800h10" stroke="#85888d" stroke-width="1.300"/></svg>
<span style="left:474.00px;top:657px;font-size:18px;line-height:18px;color:#626e93;letter-spacing:0.092px;-webkit-text-stroke:.45px #626e93;">Campaign_05</span>
<div style="left:850px;top:654px;width:40px;height:27px;background:#fff;border-radius:13.5px;border:1px solid #eceef2;"></div>
<div style="left:856.5px;top:660.5px;width:28px;height:14px;background:#d9e2f6;border-radius:7px;"></div>
<div style="left:869px;top:659.5px;width:16px;height:16px;background:#3b73e0;border-radius:8px;"></div>
<div style="left:968px;top:661px;width:10px;height:10px;background:#27a822;border-radius:5px;"></div>
<span style="left:984.00px;top:657px;font-size:18px;line-height:18px;color:#565a60;letter-spacing:0.294px;-webkit-text-stroke:.45px #565a60;">Active</span>
<span style="left:1297.00px;top:657px;font-size:18px;line-height:18px;color:#34373c;letter-spacing:-0.171px;-webkit-text-stroke:.5px #34373c;">Using ad s...</span>
<div style="left:1577px;top:665px;width:13px;height:2px;background:#b4b7bc;"></div>
<span style="left:1681.55px;top:657px;font-size:18px;line-height:18px;color:#34373c;letter-spacing:-0.298px;-webkit-text-stroke:.5px #34373c;">985</span>
<span style="left:1777.15px;top:657px;font-size:18px;line-height:18px;color:#34373c;letter-spacing:-0.342px;-webkit-text-stroke:.5px #34373c;">89,635</span>
<span style="left:1908.50px;top:657px;font-size:18px;line-height:18px;color:#34373c;letter-spacing:-0.263px;-webkit-text-stroke:.5px #34373c;">179,270</span>
<span style="left:2049.65px;top:657px;font-size:18px;line-height:18px;color:#34373c;letter-spacing:-0.174px;-webkit-text-stroke:.5px #34373c;">$4.78</span>
<span style="left:2164.10px;top:657px;font-size:18px;line-height:18px;color:#34373c;letter-spacing:-0.210px;-webkit-text-stroke:.5px #34373c;">$2,482.89</span>
<span style="left:2265.00px;top:657px;font-size:18px;line-height:18px;color:#34373c;letter-spacing:0.156px;-webkit-text-stroke:.5px #34373c;">Ongoing</span>
<span style="left:1618.00px;top:681px;font-size:14px;line-height:14px;color:#777b81;letter-spacing:-0.029px;-webkit-text-stroke:.4px #777b81;">Completed R...</span>
<span style="left:1997.00px;top:681px;font-size:14px;line-height:14px;color:#777b81;letter-spacing:-0.019px;-webkit-text-stroke:.4px #777b81;">Per Complete...</span>
<div style="left:2417px;top:664.5px;width:13px;height:2px;background:#b4b7bc;"></div>
<div style="left:364px;top:706.25px;width:2154px;height:2.5px;background:#dadce0;"></div>
<div style="left:378px;top:717px;width:25px;height:25px;background:#fff;border-radius:3px;border:1.500px solid #dcdfe3;"></div>
<svg style="left:420px;top:722.5px;" width="10" height="14" viewBox="0 0 10 14"><path d="M1.500 1l6.500 6-6.500 6" fill="none" stroke="#63666b" stroke-width="2.300"/></svg>
<svg style="left:441.5px;top:720.5px;" width="23" height="19" viewBox="0 0 23 19"><path d="M1 3.500c0-1.300.8-2.300 2.200-2.300h5.300l2 2.300h9c1.400 0 2.300.9 2.300 2.300v10c0 1.400-.9 2.300-2.300 2.300h-16.200c-1.400 0-2.300-.9-2.300-2.300z" fill="none" stroke="#85888d" stroke-width="1.600"/><path d="M1 5.800h10" stroke="#85888d" stroke-width="1.300"/></svg>
<span style="left:474.00px;top:721px;font-size:18px;line-height:18px;color:#626e93;letter-spacing:0.092px;-webkit-text-stroke:.45px #626e93;">Campaign_06</span>
<div style="left:850px;top:718px;width:40px;height:27px;background:#fff;border-radius:13.5px;border:1px solid #eceef2;"></div>
<div style="left:856.5px;top:724.5px;width:28px;height:14px;background:#d9e2f6;border-radius:7px;"></div>
<div style="left:869px;top:723.5px;width:16px;height:16px;background:#3b73e0;border-radius:8px;"></div>
<div style="left:968px;top:725px;width:10px;height:10px;background:#27a822;border-radius:5px;"></div>
<span style="left:984.00px;top:721px;font-size:18px;line-height:18px;color:#565a60;letter-spacing:0.294px;-webkit-text-stroke:.45px #565a60;">Active</span>
<span style="left:1297.00px;top:721px;font-size:18px;line-height:18px;color:#34373c;letter-spacing:-0.171px;-webkit-text-stroke:.5px #34373c;">Using ad s...</span>
<div style="left:1577px;top:729px;width:13px;height:2px;background:#b4b7bc;"></div>
<span style="left:1667.80px;top:721px;font-size:18px;line-height:18px;color:#34373c;letter-spacing:-0.462px;-webkit-text-stroke:.5px #34373c;">2,412</span>
<span style="left:1767.00px;top:721px;font-size:18px;line-height:18px;color:#34373c;letter-spacing:-0.263px;-webkit-text-stroke:.5px #34373c;">109,325</span>
<span style="left:1908.50px;top:721px;font-size:18px;line-height:18px;color:#34373c;letter-spacing:-0.263px;-webkit-text-stroke:.5px #34373c;">218,650</span>
<span style="left:2049.65px;top:721px;font-size:18px;line-height:18px;color:#34373c;letter-spacing:-0.174px;-webkit-text-stroke:.5px #34373c;">$5.01</span>
<span style="left:2164.10px;top:721px;font-size:18px;line-height:18px;color:#34373c;letter-spacing:-0.210px;-webkit-text-stroke:.5px #34373c;">$3,028.30</span>
<span style="left:2265.00px;top:721px;font-size:18px;line-height:18px;color:#34373c;letter-spacing:0.156px;-webkit-text-stroke:.5px #34373c;">Ongoing</span>
<span style="left:1618.00px;top:745px;font-size:14px;line-height:14px;color:#777b81;letter-spacing:-0.029px;-webkit-text-stroke:.4px #777b81;">Completed R...</span>
<span style="left:1997.00px;top:745px;font-size:14px;line-height:14px;color:#777b81;letter-spacing:-0.019px;-webkit-text-stroke:.4px #777b81;">Per Complete...</span>
<div style="left:2417px;top:728.5px;width:13px;height:2px;background:#b4b7bc;"></div>
<div style="left:364px;top:770.25px;width:2154px;height:2.5px;background:#dadce0;"></div>
<div style="left:378px;top:781px;width:25px;height:25px;background:#fff;border-radius:3px;border:1.500px solid #dcdfe3;"></div>
<svg style="left:420px;top:786.5px;" width="10" height="14" viewBox="0 0 10 14"><path d="M1.500 1l6.500 6-6.500 6" fill="none" stroke="#63666b" stroke-width="2.300"/></svg>
<svg style="left:441.5px;top:784.5px;" width="23" height="19" viewBox="0 0 23 19"><path d="M1 3.500c0-1.300.8-2.300 2.200-2.300h5.300l2 2.300h9c1.400 0 2.300.9 2.300 2.300v10c0 1.400-.9 2.300-2.300 2.300h-16.200c-1.400 0-2.300-.9-2.300-2.300z" fill="none" stroke="#85888d" stroke-width="1.600"/><path d="M1 5.800h10" stroke="#85888d" stroke-width="1.300"/></svg>
<span style="left:474.00px;top:785px;font-size:18px;line-height:18px;color:#626e93;letter-spacing:0.092px;-webkit-text-stroke:.45px #626e93;">Campaign_07</span>
<div style="left:850px;top:782px;width:40px;height:27px;background:#fff;border-radius:13.5px;border:1px solid #eceef2;"></div>
<div style="left:856.5px;top:788.5px;width:28px;height:14px;background:#d9e2f6;border-radius:7px;"></div>
<div style="left:869px;top:787.5px;width:16px;height:16px;background:#3b73e0;border-radius:8px;"></div>
<div style="left:968px;top:789px;width:10px;height:10px;background:#27a822;border-radius:5px;"></div>
<span style="left:984.00px;top:785px;font-size:18px;line-height:18px;color:#565a60;letter-spacing:0.294px;-webkit-text-stroke:.45px #565a60;">Active</span>
<span style="left:1297.00px;top:785px;font-size:18px;line-height:18px;color:#34373c;letter-spacing:-0.171px;-webkit-text-stroke:.5px #34373c;">Using ad s...</span>
<div style="left:1577px;top:793px;width:13px;height:2px;background:#b4b7bc;"></div>
<span style="left:1681.55px;top:785px;font-size:18px;line-height:18px;color:#34373c;letter-spacing:-0.298px;-webkit-text-stroke:.5px #34373c;">251</span>
<span style="left:1767.00px;top:785px;font-size:18px;line-height:18px;color:#34373c;letter-spacing:-0.263px;-webkit-text-stroke:.5px #34373c;">322,698</span>
<span style="left:1908.50px;top:785px;font-size:18px;line-height:18px;color:#34373c;letter-spacing:-0.263px;-webkit-text-stroke:.5px #34373c;">645,396</span>
<span style="left:2049.65px;top:785px;font-size:18px;line-height:18px;color:#34373c;letter-spacing:-0.174px;-webkit-text-stroke:.5px #34373c;">$5.74</span>
<span style="left:2164.10px;top:785px;font-size:18px;line-height:18px;color:#34373c;letter-spacing:-0.210px;-webkit-text-stroke:.5px #34373c;">$8,938.73</span>
<span style="left:2265.00px;top:785px;font-size:18px;line-height:18px;color:#34373c;letter-spacing:0.156px;-webkit-text-stroke:.5px #34373c;">Ongoing</span>
<span style="left:1618.00px;top:809px;font-size:14px;line-height:14px;color:#777b81;letter-spacing:-0.029px;-webkit-text-stroke:.4px #777b81;">Completed R...</span>
<span style="left:1997.00px;top:809px;font-size:14px;line-height:14px;color:#777b81;letter-spacing:-0.019px;-webkit-text-stroke:.4px #777b81;">Per Complete...</span>
<div style="left:2417px;top:792.5px;width:13px;height:2px;background:#b4b7bc;"></div>
<div style="left:364px;top:834.25px;width:2154px;height:2.5px;background:#dadce0;"></div>
<div style="left:378px;top:845px;width:25px;height:25px;background:#fff;border-radius:3px;border:1.500px solid #dcdfe3;"></div>
<svg style="left:420px;top:850.5px;" width="10" height="14" viewBox="0 0 10 14"><path d="M1.500 1l6.500 6-6.500 6" fill="none" stroke="#63666b" stroke-width="2.300"/></svg>
<svg style="left:441.5px;top:848.5px;" width="23" height="19" viewBox="0 0 23 19"><path d="M1 3.500c0-1.300.8-2.300 2.200-2.300h5.300l2 2.300h9c1.400 0 2.300.9 2.300 2.300v10c0 1.400-.9 2.300-2.300 2.300h-16.200c-1.400 0-2.300-.9-2.300-2.300z" fill="none" stroke="#85888d" stroke-width="1.600"/><path d="M1 5.800h10" stroke="#85888d" stroke-width="1.300"/></svg>
<span style="left:474.00px;top:849px;font-size:18px;line-height:18px;color:#626e93;letter-spacing:0.092px;-webkit-text-stroke:.45px #626e93;">Campaign_08</span>
<div style="left:850px;top:846px;width:40px;height:27px;background:#fff;border-radius:13.5px;border:1px solid #eceef2;"></div>
<div style="left:856.5px;top:852.5px;width:28px;height:14px;background:#d9e2f6;border-radius:7px;"></div>
<div style="left:869px;top:851.5px;width:16px;height:16px;background:#3b73e0;border-radius:8px;"></div>
<div style="left:968px;top:853px;width:10px;height:10px;background:#27a822;border-radius:5px;"></div>
<span style="left:984.00px;top:849px;font-size:18px;line-height:18px;color:#565a60;letter-spacing:0.294px;-webkit-text-stroke:.45px #565a60;">Active</span>
<span style="left:1297.00px;top:849px;font-size:18px;line-height:18px;color:#34373c;letter-spacing:-0.171px;-webkit-text-stroke:.5px #34373c;">Using ad s...</span>
<div style="left:1577px;top:857px;width:13px;height:2px;background:#b4b7bc;"></div>
<span style="left:1667.80px;top:849px;font-size:18px;line-height:18px;color:#34373c;letter-spacing:-0.462px;-webkit-text-stroke:.5px #34373c;">2,147</span>
<span style="left:1777.15px;top:849px;font-size:18px;line-height:18px;color:#34373c;letter-spacing:-0.342px;-webkit-text-stroke:.5px #34373c;">14,035</span>
<span style="left:1918.65px;top:849px;font-size:18px;line-height:18px;color:#34373c;letter-spacing:-0.342px;-webkit-text-stroke:.5px #34373c;">28,070</span>
<span style="left:2049.65px;top:849px;font-size:18px;line-height:18px;color:#34373c;letter-spacing:-0.174px;-webkit-text-stroke:.5px #34373c;">$4.56</span>
<span style="left:2177.85px;top:849px;font-size:18px;line-height:18px;color:#34373c;letter-spacing:-0.071px;-webkit-text-stroke:.5px #34373c;">$388.77</span>
<span style="left:2265.00px;top:849px;font-size:18px;line-height:18px;color:#34373c;letter-spacing:0.156px;-webkit-text-stroke:.5px #34373c;">Ongoing</span>
<span style="left:1618.00px;top:873px;font-size:14px;line-height:14px;color:#777b81;letter-spacing:-0.029px;-webkit-text-stroke:.4px #777b81;">Completed R...</span>
<span style="left:1997.00px;top:873px;font-size:14px;line-height:14px;color:#777b81;letter-spacing:-0.019px;-webkit-text-stroke:.4px #777b81;">Per Complete...</span>
<div style="left:2417px;top:856.5px;width:13px;height:2px;background:#b4b7bc;"></div>
<div style="left:364px;top:898.25px;width:2154px;height:2.5px;background:#dadce0;"></div>
<div style="left:378px;top:909px;width:25px;height:25px;background:#fff;border-radius:3px;border:1.500px solid #dcdfe3;"></div>
<svg style="left:417px;top:917.5px;" width="15" height="10" viewBox="0 0 15 10"><path d="M1 1.500l6.500 6.500 6.500-6.500" fill="none" stroke="#63666b" stroke-width="2.300"/></svg>
<svg style="left:441.5px;top:912.5px;" width="23" height="19" viewBox="0 0 23 19"><path d="M1 3.500c0-1.300.8-2.300 2.200-2.300h5.300l2 2.300h9c1.400 0 2.300.9 2.300 2.300v10c0 1.400-.9 2.300-2.300 2.300h-16.200c-1.400 0-2.300-.9-2.300-2.300z" fill="none" stroke="#85888d" stroke-width="1.600"/><path d="M1 5.800h10" stroke="#85888d" stroke-width="1.300"/></svg>
<span style="left:474.00px;top:913px;font-size:18px;line-height:18px;color:#626e93;letter-spacing:0.092px;-webkit-text-stroke:.45px #626e93;">Campaign_09</span>
<div style="left:850px;top:910px;width:40px;height:27px;background:#fff;border-radius:13.5px;border:1px solid #eceef2;"></div>
<div style="left:856.5px;top:916.5px;width:28px;height:14px;background:#d9e2f6;border-radius:7px;"></div>
<div style="left:869px;top:915.5px;width:16px;height:16px;background:#3b73e0;border-radius:8px;"></div>
<div style="left:968px;top:917px;width:10px;height:10px;background:#27a822;border-radius:5px;"></div>
<span style="left:984.00px;top:913px;font-size:18px;line-height:18px;color:#565a60;letter-spacing:0.294px;-webkit-text-stroke:.45px #565a60;">Active</span>
<span style="left:1297.00px;top:913px;font-size:18px;line-height:18px;color:#34373c;letter-spacing:-0.171px;-webkit-text-stroke:.5px #34373c;">Using ad s...</span>
<div style="left:1577px;top:921px;width:13px;height:2px;background:#b4b7bc;"></div>
<span style="left:1681.55px;top:913px;font-size:18px;line-height:18px;color:#34373c;letter-spacing:-0.298px;-webkit-text-stroke:.5px #34373c;">844</span>
<span style="left:1787.30px;top:913px;font-size:18px;line-height:18px;color:#34373c;letter-spacing:-0.462px;-webkit-text-stroke:.5px #34373c;">2,548</span>
<span style="left:1928.80px;top:913px;font-size:18px;line-height:18px;color:#34373c;letter-spacing:-0.462px;-webkit-text-stroke:.5px #34373c;">5,096</span>
<span style="left:2054.35px;top:913px;font-size:18px;line-height:18px;color:#34373c;letter-spacing:-0.132px;-webkit-text-stroke:.5px #34373c;">$379</span>
<span style="left:2188.00px;top:913px;font-size:18px;line-height:18px;color:#34373c;letter-spacing:-0.113px;-webkit-text-stroke:.5px #34373c;">$70.58</span>
<span style="left:2265.00px;top:913px;font-size:18px;line-height:18px;color:#34373c;letter-spacing:0.156px;-webkit-text-stroke:.5px #34373c;">Ongoing</span>
<span style="left:1618.00px;top:937px;font-size:14px;line-height:14px;color:#777b81;letter-spacing:-0.029px;-webkit-text-stroke:.4px #777b81;">Completed R...</span>
<span style="left:1997.00px;top:937px;font-size:14px;line-height:14px;color:#777b81;letter-spacing:-0.019px;-webkit-text-stroke:.4px #777b81;">Per Complete...</span>
<div style="left:2417px;top:920.5px;width:13px;height:2px;background:#b4b7bc;"></div>
<div style="left:364px;top:450.25px;width:2154px;height:2.5px;background:#d9dde5;"></div>
<div style="left:364px;top:962.25px;width:2154px;height:2.5px;background:#dadce0;"></div>
<div style="left:426.5px;top:972.5px;width:25px;height:25px;background:#fff;border-radius:3px;border:1.500px solid #dcdfe3;"></div>
<div style="left:461px;top:976px;width:21px;height:20px;background:#f0f1f3;border-radius:3px;"></div>
<svg style="left:464.5px;top:982px;" width="15" height="10" viewBox="0 0 15 10"><path d="M1 1.500l6.500 6.500 6.500-6.500" fill="none" stroke="#63666b" stroke-width="2.300"/></svg>
<svg style="left:489.5px;top:976px;" width="21" height="21" viewBox="0 0 21 21"><rect x="0.95" y="0.95" width="7.6" height="7.6" rx="1.5" fill="none" stroke="#6c6f75" stroke-width="1.9"/><path d="M0.95 4.37h7.6" stroke="#6c6f75" stroke-width="1.52"/><rect x="11.45" y="0.95" width="7.6" height="7.6" rx="1.5" fill="none" stroke="#6c6f75" stroke-width="1.9"/><path d="M11.45 4.37h7.6" stroke="#6c6f75" stroke-width="1.52"/><rect x="0.95" y="11.45" width="7.6" height="7.6" rx="1.5" fill="none" stroke="#6c6f75" stroke-width="1.9"/><path d="M0.95 14.87h7.6" stroke="#6c6f75" stroke-width="1.52"/><rect x="11.45" y="11.45" width="7.6" height="7.6" rx="1.5" fill="none" stroke="#6c6f75" stroke-width="1.9"/><path d="M11.45 14.87h7.6" stroke="#6c6f75" stroke-width="1.52"/></svg>
<span style="left:520.50px;top:978px;font-size:18px;line-height:18px;color:#626e93;letter-spacing:-0.385px;-webkit-text-stroke:.45px #626e93;">Ad_Set_01</span>
<div style="left:849px;top:975px;width:40px;height:27px;background:#fff;border-radius:13.5px;border:1px solid #eceef2;"></div>
<div style="left:855.5px;top:981.5px;width:28px;height:14px;background:#d9e2f6;border-radius:7px;"></div>
<div style="left:868px;top:980.5px;width:16px;height:16px;background:#3b73e0;border-radius:8px;"></div>
<div style="left:966.5px;top:981.5px;width:10px;height:10px;background:#27a822;border-radius:5px;"></div>
<span style="left:982.50px;top:978px;font-size:18px;line-height:18px;color:#565a60;letter-spacing:0.294px;-webkit-text-stroke:.45px #565a60;">Active</span>
<span style="left:981.50px;top:1001px;font-size:13.5px;line-height:13.5px;color:#a0a4aa;letter-spacing:0.527px;-webkit-text-stroke:.3px #a0a4aa;">Initial learning complete</span>
<span style="left:1156.50px;top:978px;font-size:18px;line-height:18px;color:#34373c;letter-spacing:0.284px;-webkit-text-stroke:.5px #34373c;">$2.79 bid cap</span>
<span style="left:1156.50px;top:1001px;font-size:14px;line-height:14px;color:#777b81;letter-spacing:0.167px;-webkit-text-stroke:.4px #777b81;">Conversions</span>
<span style="left:1299.00px;top:977px;font-size:18px;line-height:18px;color:#34373c;letter-spacing:0.240px;-webkit-text-stroke:.5px #34373c;">$1,021.00</span>
<span style="left:1296.00px;top:1001px;font-size:14px;line-height:14px;color:#777b81;letter-spacing:-0.031px;-webkit-text-stroke:.4px #777b81;">Daily</span>
<div style="left:1575px;top:985px;width:13px;height:2px;background:#b4b7bc;"></div>
<span style="left:1680.05px;top:978px;font-size:18px;line-height:18px;color:#34373c;letter-spacing:0.373px;-webkit-text-stroke:.5px #34373c;">211</span>
<span style="left:1775.65px;top:978px;font-size:18px;line-height:18px;color:#34373c;letter-spacing:-0.342px;-webkit-text-stroke:.5px #34373c;">47,855</span>
<span style="left:1917.15px;top:978px;font-size:18px;line-height:18px;color:#34373c;letter-spacing:-0.342px;-webkit-text-stroke:.5px #34373c;">95,710</span>
<span style="left:2048.15px;top:978px;font-size:18px;line-height:18px;color:#34373c;letter-spacing:-0.174px;-webkit-text-stroke:.5px #34373c;">$5.83</span>
<span style="left:2164.10px;top:978px;font-size:18px;line-height:18px;color:#34373c;letter-spacing:-0.210px;-webkit-text-stroke:.5px #34373c;">$1,325.58</span>
<span style="left:2264.00px;top:978px;font-size:18px;line-height:18px;color:#34373c;letter-spacing:0.156px;-webkit-text-stroke:.5px #34373c;">Ongoing</span>
<span style="left:1616.50px;top:1000px;font-size:14px;line-height:14px;color:#777b81;letter-spacing:-0.029px;-webkit-text-stroke:.4px #777b81;">Completed R...</span>
<span style="left:1995.50px;top:1000px;font-size:14px;line-height:14px;color:#777b81;letter-spacing:-0.019px;-webkit-text-stroke:.4px #777b81;">Per Complete...</span>
<span style="left:2415.00px;top:977px;font-size:18px;line-height:18px;color:#34373c;letter-spacing:0.144px;-webkit-text-stroke:.5px #34373c;">Mar 2, 2019</span>
<div style="left:364px;top:1025.5px;width:2154px;height:1px;background:#f0f1f3;"></div>
<svg style="left:489px;top:1037px;" width="40" height="40" viewBox="0 0 40 40"><defs><filter id="tb0" x="-10%" y="-10%" width="120%" height="120%"><feGaussianBlur stdDeviation="1.300"/></filter><clipPath id="tc0"><rect width="40" height="40" rx="6"/></clipPath></defs><g clip-path="url(#tc0)"><g filter="url(#tb0)"><rect width="40" height="40" fill="#a3968a"/><rect y="33" width="40" height="7" fill="#c9c2ba"/><ellipse cx="20" cy="9" rx="13" ry="3.500" fill="#e9e1d2"/><rect x="12" y="11" width="17" height="11" fill="#4a1a18"/><ellipse cx="20" cy="27" rx="11" ry="9" fill="#8e1224"/><rect x="10" y="22.500" width="21" height="3" fill="#d98a92"/><ellipse cx="20" cy="34" rx="10" ry="2.500" fill="#7a1020"/></g></g></svg>
<span style="left:541.00px;top:1040px;font-size:18px;line-height:18px;color:#626e93;letter-spacing:-0.391px;-webkit-text-stroke:.45px #626e93;">Ad_01</span>
<div style="left:848.5px;top:1037.5px;width:40px;height:27px;background:#fff;border-radius:13.5px;border:1px solid #eceef2;"></div>
<div style="left:855px;top:1044px;width:28px;height:14px;background:#d9e2f6;border-radius:7px;"></div>
<div style="left:867.5px;top:1043px;width:16px;height:16px;background:#3b73e0;border-radius:8px;"></div>
<div style="left:966.5px;top:1044.5px;width:10px;height:10px;background:#27a822;border-radius:5px;"></div>
<span style="left:982.50px;top:1041px;font-size:18px;line-height:18px;color:#565a60;letter-spacing:0.294px;-webkit-text-stroke:.45px #565a60;">Active</span>
<span style="left:981.50px;top:1064px;font-size:13.5px;line-height:13.5px;color:#a0a4aa;letter-spacing:0.527px;-webkit-text-stroke:.3px #a0a4aa;">Initial learning complete</span>
<span style="left:1155.50px;top:1040px;font-size:18px;line-height:18px;color:#34373c;letter-spacing:0.238px;-webkit-text-stroke:.5px #34373c;">$2.79</span>
<span style="left:1156.50px;top:1063px;font-size:14px;line-height:14px;color:#777b81;letter-spacing:0.167px;-webkit-text-stroke:.4px #777b81;">Conversions</span>
<div style="left:1297px;top:1047.5px;width:13px;height:2px;background:#b4b7bc;"></div>
<div style="left:1575px;top:1047.5px;width:13px;height:2px;background:#b4b7bc;"></div>
<span style="left:1687.20px;top:1040px;font-size:18px;line-height:18px;color:#34373c;letter-spacing:-0.731px;-webkit-text-stroke:.5px #34373c;">76</span>
<span style="left:1772.65px;top:1040px;font-size:18px;line-height:18px;color:#34373c;letter-spacing:-0.342px;-webkit-text-stroke:.5px #34373c;">22,356</span>
<span style="left:1914.15px;top:1040px;font-size:18px;line-height:18px;color:#34373c;letter-spacing:-0.342px;-webkit-text-stroke:.5px #34373c;">44,712</span>
<span style="left:2045.15px;top:1040px;font-size:18px;line-height:18px;color:#34373c;letter-spacing:-0.174px;-webkit-text-stroke:.5px #34373c;">$6.51</span>
<span style="left:2177.85px;top:1040px;font-size:18px;line-height:18px;color:#34373c;letter-spacing:-0.071px;-webkit-text-stroke:.5px #34373c;">$619.26</span>
<span style="left:2264.00px;top:1040px;font-size:18px;line-height:18px;color:#34373c;letter-spacing:0.156px;-webkit-text-stroke:.5px #34373c;">Ongoing</span>
<span style="left:1613.50px;top:1063px;font-size:14px;line-height:14px;color:#777b81;letter-spacing:-0.029px;-webkit-text-stroke:.4px #777b81;">Completed R...</span>
<span style="left:1992.50px;top:1063px;font-size:14px;line-height:14px;color:#777b81;letter-spacing:-0.019px;-webkit-text-stroke:.4px #777b81;">Per Complete...</span>
<div style="left:2416px;top:1047.5px;width:13px;height:2px;background:#b4b7bc;"></div>
<svg style="left:489px;top:1101px;" width="40" height="40" viewBox="0 0 40 40"><defs><filter id="tb1" x="-10%" y="-10%" width="120%" height="120%"><feGaussianBlur stdDeviation="1.300"/></filter><clipPath id="tc1"><rect width="40" height="40" rx="6"/></clipPath></defs><g clip-path="url(#tc1)"><g filter="url(#tb1)"><rect width="40" height="40" fill="#34343c"/><circle cx="19" cy="21" r="17" fill="#f1ede6"/><circle cx="20" cy="21" r="14.500" fill="#4a2416"/><path d="M14 8c8-4 16-2 21 5l-3 11-11-3z" fill="#6ea03c"/><path d="M17 24l15-3c3 6 0 13-8 15-6 1-10-5-7-12z" fill="#e08a22"/><circle cx="13" cy="19" r="6" fill="#3a160e"/></g></g></svg>
<span style="left:541.00px;top:1104px;font-size:18px;line-height:18px;color:#626e93;letter-spacing:-0.391px;-webkit-text-stroke:.45px #626e93;">Ad_02</span>
<div style="left:848.5px;top:1101.5px;width:40px;height:27px;background:#fff;border-radius:13.5px;border:1px solid #eceef2;"></div>
<div style="left:855px;top:1108px;width:28px;height:14px;background:#d9e2f6;border-radius:7px;"></div>
<div style="left:867.5px;top:1107px;width:16px;height:16px;background:#3b73e0;border-radius:8px;"></div>
<div style="left:966.5px;top:1108.5px;width:10px;height:10px;background:#27a822;border-radius:5px;"></div>
<span style="left:982.50px;top:1105px;font-size:18px;line-height:18px;color:#565a60;letter-spacing:0.294px;-webkit-text-stroke:.45px #565a60;">Active</span>
<span style="left:981.50px;top:1128px;font-size:13.5px;line-height:13.5px;color:#a0a4aa;letter-spacing:0.527px;-webkit-text-stroke:.3px #a0a4aa;">Initial learning complete</span>
<span style="left:1155.50px;top:1104px;font-size:18px;line-height:18px;color:#34373c;letter-spacing:0.238px;-webkit-text-stroke:.5px #34373c;">$2.79</span>
<span style="left:1156.50px;top:1127px;font-size:14px;line-height:14px;color:#777b81;letter-spacing:0.167px;-webkit-text-stroke:.4px #777b81;">Conversions</span>
<div style="left:1297px;top:1111.5px;width:13px;height:2px;background:#b4b7bc;"></div>
<div style="left:1575px;top:1111.5px;width:13px;height:2px;background:#b4b7bc;"></div>
<span style="left:1687.20px;top:1104px;font-size:18px;line-height:18px;color:#34373c;letter-spacing:-0.731px;-webkit-text-stroke:.5px #34373c;">24</span>
<span style="left:1772.65px;top:1104px;font-size:18px;line-height:18px;color:#34373c;letter-spacing:-0.342px;-webkit-text-stroke:.5px #34373c;">89,635</span>
<span style="left:1904.00px;top:1104px;font-size:18px;line-height:18px;color:#34373c;letter-spacing:-0.263px;-webkit-text-stroke:.5px #34373c;">179,270</span>
<span style="left:2045.15px;top:1104px;font-size:18px;line-height:18px;color:#34373c;letter-spacing:-0.174px;-webkit-text-stroke:.5px #34373c;">$4.78</span>
<span style="left:2164.10px;top:1104px;font-size:18px;line-height:18px;color:#34373c;letter-spacing:-0.210px;-webkit-text-stroke:.5px #34373c;">$2,482.89</span>
<span style="left:2264.00px;top:1104px;font-size:18px;line-height:18px;color:#34373c;letter-spacing:0.156px;-webkit-text-stroke:.5px #34373c;">Ongoing</span>
<span style="left:1613.50px;top:1127px;font-size:14px;line-height:14px;color:#777b81;letter-spacing:-0.029px;-webkit-text-stroke:.4px #777b81;">Completed R...</span>
<span style="left:1992.50px;top:1127px;font-size:14px;line-height:14px;color:#777b81;letter-spacing:-0.019px;-webkit-text-stroke:.4px #777b81;">Per Complete...</span>
<div style="left:2416px;top:1111.5px;width:13px;height:2px;background:#b4b7bc;"></div>
<svg style="left:489px;top:1165px;" width="40" height="40" viewBox="0 0 40 40"><defs><filter id="tb2" x="-10%" y="-10%" width="120%" height="120%"><feGaussianBlur stdDeviation="1.300"/></filter><clipPath id="tc2"><rect width="40" height="40" rx="6"/></clipPath></defs><g clip-path="url(#tc2)"><g filter="url(#tb2)"><rect width="40" height="40" fill="#4a3a1c"/><rect y="0" width="40" height="8" fill="#5a4a2a"/><ellipse cx="15" cy="19" rx="12" ry="10" fill="#d6b24a"/><path d="M24 16l14 14-6 4-12-12z" fill="#c8542a"/><ellipse cx="14" cy="12" rx="9" ry="4" fill="#b09a40"/><rect y="31" width="40" height="9" fill="#345a22"/><rect y="36" width="40" height="4" fill="#1e2a18"/><circle cx="33" cy="34" r="2" fill="#dfe6d8"/></g></g></svg>
<span style="left:541.00px;top:1168px;font-size:18px;line-height:18px;color:#626e93;letter-spacing:-0.391px;-webkit-text-stroke:.45px #626e93;">Ad_03</span>
<div style="left:848.5px;top:1165.5px;width:40px;height:27px;background:#fff;border-radius:13.5px;border:1px solid #eceef2;"></div>
<div style="left:855px;top:1172px;width:28px;height:14px;background:#d9e2f6;border-radius:7px;"></div>
<div style="left:867.5px;top:1171px;width:16px;height:16px;background:#3b73e0;border-radius:8px;"></div>
<div style="left:966.5px;top:1172.5px;width:10px;height:10px;background:#27a822;border-radius:5px;"></div>
<span style="left:982.50px;top:1169px;font-size:18px;line-height:18px;color:#565a60;letter-spacing:0.294px;-webkit-text-stroke:.45px #565a60;">Active</span>
<span style="left:981.50px;top:1192px;font-size:13.5px;line-height:13.5px;color:#a0a4aa;letter-spacing:0.527px;-webkit-text-stroke:.3px #a0a4aa;">Initial learning complete</span>
<span style="left:1155.50px;top:1168px;font-size:18px;line-height:18px;color:#34373c;letter-spacing:0.238px;-webkit-text-stroke:.5px #34373c;">$2.79</span>
<span style="left:1156.50px;top:1191px;font-size:14px;line-height:14px;color:#777b81;letter-spacing:0.167px;-webkit-text-stroke:.4px #777b81;">Conversions</span>
<div style="left:1297px;top:1175.5px;width:13px;height:2px;background:#b4b7bc;"></div>
<div style="left:1575px;top:1175.5px;width:13px;height:2px;background:#b4b7bc;"></div>
<span style="left:1687.20px;top:1168px;font-size:18px;line-height:18px;color:#34373c;letter-spacing:-0.731px;-webkit-text-stroke:.5px #34373c;">18</span>
<span style="left:1762.50px;top:1168px;font-size:18px;line-height:18px;color:#34373c;letter-spacing:-0.263px;-webkit-text-stroke:.5px #34373c;">109,325</span>
<span style="left:1904.00px;top:1168px;font-size:18px;line-height:18px;color:#34373c;letter-spacing:-0.263px;-webkit-text-stroke:.5px #34373c;">218,650</span>
<span style="left:2045.15px;top:1168px;font-size:18px;line-height:18px;color:#34373c;letter-spacing:-0.174px;-webkit-text-stroke:.5px #34373c;">$5.01</span>
<span style="left:2164.10px;top:1168px;font-size:18px;line-height:18px;color:#34373c;letter-spacing:-0.210px;-webkit-text-stroke:.5px #34373c;">$3,028.30</span>
<span style="left:2264.00px;top:1168px;font-size:18px;line-height:18px;color:#34373c;letter-spacing:0.156px;-webkit-text-stroke:.5px #34373c;">Ongoing</span>
<span style="left:1613.50px;top:1191px;font-size:14px;line-height:14px;color:#777b81;letter-spacing:-0.029px;-webkit-text-stroke:.4px #777b81;">Completed R...</span>
<span style="left:1992.50px;top:1191px;font-size:14px;line-height:14px;color:#777b81;letter-spacing:-0.019px;-webkit-text-stroke:.4px #777b81;">Per Complete...</span>
<div style="left:2416px;top:1175.5px;width:13px;height:2px;background:#b4b7bc;"></div>
<svg style="left:489px;top:1229px;" width="40" height="40" viewBox="0 0 40 40"><defs><filter id="tb3" x="-10%" y="-10%" width="120%" height="120%"><feGaussianBlur stdDeviation="1.300"/></filter><clipPath id="tc3"><rect width="40" height="40" rx="6"/></clipPath></defs><g clip-path="url(#tc3)"><g filter="url(#tb3)"><rect width="40" height="40" fill="#e4b48a"/><circle cx="9" cy="10" r="9" fill="#c8402a"/><circle cx="6" cy="26" r="9" fill="#b81e3c"/><circle cx="14" cy="37" r="6" fill="#d0482a"/><circle cx="27" cy="12" r="8" fill="#e8b27e"/><circle cx="30" cy="28" r="9" fill="#f0c89e"/><circle cx="20" cy="6" r="3" fill="#9a5a2c"/><circle cx="36" cy="8" r="3" fill="#a4642e"/><circle cx="22" cy="22" r="2.500" fill="#b87a44"/><circle cx="37" cy="36" r="3" fill="#a8683a"/></g></g></svg>
<span style="left:541.00px;top:1232px;font-size:18px;line-height:18px;color:#626e93;letter-spacing:-0.391px;-webkit-text-stroke:.45px #626e93;">Ad_04</span>
<div style="left:848.5px;top:1229.5px;width:40px;height:27px;background:#fff;border-radius:13.5px;border:1px solid #eceef2;"></div>
<div style="left:855px;top:1236px;width:28px;height:14px;background:#d9e2f6;border-radius:7px;"></div>
<div style="left:867.5px;top:1235px;width:16px;height:16px;background:#3b73e0;border-radius:8px;"></div>
<div style="left:966.5px;top:1236.5px;width:10px;height:10px;background:#27a822;border-radius:5px;"></div>
<span style="left:982.50px;top:1233px;font-size:18px;line-height:18px;color:#565a60;letter-spacing:0.294px;-webkit-text-stroke:.45px #565a60;">Active</span>
<span style="left:981.50px;top:1256px;font-size:13.5px;line-height:13.5px;color:#a0a4aa;letter-spacing:0.527px;-webkit-text-stroke:.3px #a0a4aa;">Initial learning complete</span>
<span style="left:1155.50px;top:1232px;font-size:18px;line-height:18px;color:#34373c;letter-spacing:0.238px;-webkit-text-stroke:.5px #34373c;">$2.79</span>
<span style="left:1156.50px;top:1255px;font-size:14px;line-height:14px;color:#777b81;letter-spacing:0.167px;-webkit-text-stroke:.4px #777b81;">Conversions</span>
<div style="left:1297px;top:1239.5px;width:13px;height:2px;background:#b4b7bc;"></div>
<div style="left:1575px;top:1239.5px;width:13px;height:2px;background:#b4b7bc;"></div>
<span style="left:1687.20px;top:1232px;font-size:18px;line-height:18px;color:#34373c;letter-spacing:-0.731px;-webkit-text-stroke:.5px #34373c;">96</span>
<span style="left:1762.50px;top:1232px;font-size:18px;line-height:18px;color:#34373c;letter-spacing:-0.263px;-webkit-text-stroke:.5px #34373c;">322,698</span>
<span style="left:1904.00px;top:1232px;font-size:18px;line-height:18px;color:#34373c;letter-spacing:-0.263px;-webkit-text-stroke:.5px #34373c;">645,396</span>
<span style="left:2045.15px;top:1232px;font-size:18px;line-height:18px;color:#34373c;letter-spacing:-0.174px;-webkit-text-stroke:.5px #34373c;">$5.75</span>
<span style="left:2164.10px;top:1232px;font-size:18px;line-height:18px;color:#34373c;letter-spacing:-0.210px;-webkit-text-stroke:.5px #34373c;">$8,938.73</span>
<span style="left:2264.00px;top:1232px;font-size:18px;line-height:18px;color:#34373c;letter-spacing:0.156px;-webkit-text-stroke:.5px #34373c;">Ongoing</span>
<span style="left:1613.50px;top:1255px;font-size:14px;line-height:14px;color:#777b81;letter-spacing:-0.029px;-webkit-text-stroke:.4px #777b81;">Completed R...</span>
<span style="left:1992.50px;top:1255px;font-size:14px;line-height:14px;color:#777b81;letter-spacing:-0.019px;-webkit-text-stroke:.4px #777b81;">Per Complete...</span>
<div style="left:2416px;top:1239.5px;width:13px;height:2px;background:#b4b7bc;"></div>
<div style="left:364px;top:1283.25px;width:2154px;height:2.5px;background:#dadce0;"></div>
<div style="left:426.5px;top:1292.5px;width:25px;height:25px;background:#fff;border-radius:3px;border:1.500px solid #dcdfe3;"></div>
<svg style="left:466px;top:1297.5px;" width="10" height="14" viewBox="0 0 10 14"><path d="M1.500 1l6.500 6-6.500 6" fill="none" stroke="#63666b" stroke-width="2.300"/></svg>
<svg style="left:488.5px;top:1295px;" width="21" height="21" viewBox="0 0 21 21"><rect x="0.95" y="0.95" width="7.6" height="7.6" rx="1.5" fill="none" stroke="#6c6f75" stroke-width="1.9"/><path d="M0.95 4.37h7.6" stroke="#6c6f75" stroke-width="1.52"/><rect x="11.45" y="0.95" width="7.6" height="7.6" rx="1.5" fill="none" stroke="#6c6f75" stroke-width="1.9"/><path d="M11.45 4.37h7.6" stroke="#6c6f75" stroke-width="1.52"/><rect x="0.95" y="11.45" width="7.6" height="7.6" rx="1.5" fill="none" stroke="#6c6f75" stroke-width="1.9"/><path d="M0.95 14.87h7.6" stroke="#6c6f75" stroke-width="1.52"/><rect x="11.45" y="11.45" width="7.6" height="7.6" rx="1.5" fill="none" stroke="#6c6f75" stroke-width="1.9"/><path d="M11.45 14.87h7.6" stroke="#6c6f75" stroke-width="1.52"/></svg>
<span style="left:520.00px;top:1296px;font-size:18px;line-height:18px;color:#626e93;letter-spacing:-0.322px;-webkit-text-stroke:.3px #626e93;">Ad_Set_02</span>
<div style="left:849px;top:1293.5px;width:40px;height:27px;background:#fff;border-radius:13.5px;border:1px solid #eceef2;"></div>
<div style="left:855.5px;top:1300px;width:28px;height:14px;background:#d9e2f6;border-radius:7px;"></div>
<div style="left:868px;top:1299px;width:16px;height:16px;background:#3b73e0;border-radius:8px;"></div>
<div style="left:966.5px;top:1300px;width:10px;height:10px;background:#27a822;border-radius:5px;"></div>
<span style="left:982.50px;top:1296px;font-size:18px;line-height:18px;color:#565a60;letter-spacing:0.294px;-webkit-text-stroke:.45px #565a60;">Active</span>
<span style="left:1154.00px;top:1296px;font-size:18px;line-height:18px;color:#464a50;letter-spacing:0.492px;">$1.89 bid cap</span>
<span style="left:1313.00px;top:1296px;font-size:18px;line-height:18px;color:#464a50;letter-spacing:0.320px;">$962.32</span>
<div style="left:1575px;top:1303.5px;width:13px;height:2px;background:#b4b7bc;"></div>
<span style="left:1679.55px;top:1296px;font-size:18px;line-height:18px;color:#464a50;letter-spacing:-0.298px;-webkit-text-stroke:.2px #464a50;">784</span>
<span style="left:1775.15px;top:1296px;font-size:18px;line-height:18px;color:#464a50;letter-spacing:-0.342px;-webkit-text-stroke:.2px #464a50;">18,120</span>
<span style="left:1916.65px;top:1296px;font-size:18px;line-height:18px;color:#464a50;letter-spacing:-0.342px;-webkit-text-stroke:.2px #464a50;">47,798</span>
<span style="left:2047.65px;top:1296px;font-size:18px;line-height:18px;color:#464a50;letter-spacing:-0.174px;-webkit-text-stroke:.2px #464a50;">$6.13</span>
<span style="left:2177.85px;top:1296px;font-size:18px;line-height:18px;color:#464a50;letter-spacing:-0.071px;-webkit-text-stroke:.2px #464a50;">$662.00</span>
<span style="left:2264.00px;top:1296px;font-size:18px;line-height:18px;color:#464a50;letter-spacing:0.156px;-webkit-text-stroke:.2px #464a50;">Ongoing</span>
<div style="left:364px;top:1317px;width:2160px;height:70px;background:#fff;"></div>
<div style="left:364px;top:1317.25px;width:2154px;height:2px;background:#e3e5e8;"></div>
<svg style="left:430px;top:1335px;" width="7" height="11" viewBox="0 0 7 11"><path d="M0.500 0.500v10l6-5z" fill="#b4b7bc"/></svg>
<span style="left:463.50px;top:1333px;font-size:17.5px;line-height:17.5px;color:#3b3e43;font-weight:700;letter-spacing:-0.033px;">Results from 245 campaigns</span>
<svg style="left:708.5px;top:1333px;" width="15" height="15" viewBox="0 0 15 15"><circle cx="7.500" cy="7.500" r="7" fill="#c3c6cb"/><path d="M7.500 6.500v5M7.500 3.500v1.600" stroke="#fff" stroke-width="1.600"/></svg>
<div style="left:1577px;top:1339.5px;width:14px;height:2px;background:#6d7177;"></div>
<div style="left:1698px;top:1339.5px;width:13px;height:2px;background:#6d7177;"></div>
<span style="left:1747.00px;top:1332px;font-size:18px;line-height:18px;color:#3b3e43;font-weight:700;letter-spacing:0.240px;">1,431,398</span>
<span style="left:1786.00px;top:1354px;font-size:13.5px;line-height:13.5px;color:#9b9fa5;letter-spacing:0.191px;">People</span>
<span style="left:1885.00px;top:1332px;font-size:18px;line-height:18px;color:#3b3e43;font-weight:700;letter-spacing:0.490px;">2,862,796</span>
<span style="left:1940.00px;top:1354px;font-size:13.5px;line-height:13.5px;color:#9b9fa5;letter-spacing:0.867px;">Total</span>
<div style="left:2081px;top:1339.5px;width:13px;height:2px;background:#6d7177;"></div>
<span style="left:2148.00px;top:1332px;font-size:18px;line-height:18px;color:#3b3e43;font-weight:700;letter-spacing:0.545px;">$39,649.72</span>
<span style="left:2171.00px;top:1354px;font-size:13.5px;line-height:13.5px;color:#9b9fa5;letter-spacing:0.495px;">Total Spent</span>
<div style="left:369px;top:1391.5px;width:1627px;height:9px;background:#c3c5c9;border-radius:4.5px;"></div>
<div style="left:2502px;top:373px;width:10px;height:538px;background:#c0c3c7;border-radius:5px;"></div>
<svg style="left:502px;top:411px;" width="22" height="32" viewBox="0 0 22 32"><path d="M1.500 1.500v22l5.200-5 4.300 10 4-1.700-4.300-9.800h7.300z" fill="#111" stroke="#fff" stroke-width="1"/></svg>
</div></div>
</body></html>
